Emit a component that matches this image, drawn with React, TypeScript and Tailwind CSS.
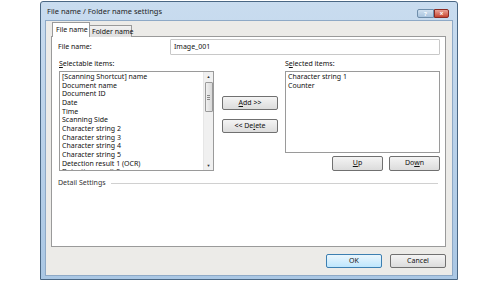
import React from "react";

const F = { fontFamily: '"Noto Sans", "Open Sans", sans-serif' } as const;

function Btn({ children, w, h = 14, primary = false }: { children: React.ReactNode; w: number; h?: number; primary?: boolean }) {
  return (
    <div
      className={
        "flex items-center justify-center whitespace-nowrap rounded-[2px] border text-[7px] text-[#111] " +
        (primary
          ? "border-[#3c7fb1] bg-gradient-to-b from-[#eaf6fd] to-[#bee6fd]"
          : "border-[#707070] bg-gradient-to-b from-[#f4f4f4] to-[#dcdcdc]")
      }
      style={{ width: w, height: h }}
    >
      {children}
    </div>
  );
}

const items = [
  "[Scanning Shortcut] name",
  "Document name",
  "Document ID",
  "Date",
  "Time",
  "Scanning Side",
  "Character string 2",
  "Character string 3",
  "Character string 4",
  "Character string 5",
  "Detection result 1 (OCR)",
  "Detection result 2",
];

export default function App() {
  return (
    <div className="w-[500px] h-[281px] bg-white overflow-hidden" style={F}>
      <div className="ml-[40px] mt-[1px] w-[418px] h-[279px] border border-[#4a6784] bg-gradient-to-b from-[#c9dcef] to-[#aac7e4] flex flex-col rounded-t-[3px]">
        {/* title bar */}
        <div className="h-[18px] flex items-start shrink-0">
          <div className="ml-[6px] mt-[4px] text-[7.5px] text-[#1e1e1e] leading-[10px] whitespace-nowrap">File name / Folder name settings</div>
          <div className="ml-auto mr-[8px] mt-[7px] flex">
            <div className="w-[17px] h-[9px] border border-[#6f8eab] rounded-l-[2px] bg-gradient-to-b from-[#cfe0f0] to-[#a9c4de] flex items-center justify-center text-[6px] text-white font-bold leading-none">?</div>
            <div className="w-[15px] h-[9px] border border-[#8b2a22] rounded-r-[2px] bg-gradient-to-b from-[#e9a196] to-[#c6442f] flex items-center justify-center text-[7px] text-white font-bold leading-none">×</div>
          </div>
        </div>
        {/* client */}
        <div className="mx-[4px] mb-[3px] flex-1 bg-[#ecebe8] border border-[#8ea9c6] flex flex-col">
          {/* tabs */}
          <div className="ml-[6px] mt-[1px] h-[15px] flex items-end relative z-10">
            <div className="w-[38px] h-[15px] bg-white border border-b-0 border-[#9a9a9a] text-[7px] leading-[13px] pl-[3px] text-[#111] whitespace-nowrap">File name</div>
            <div className="w-[42px] h-[12px] bg-gradient-to-b from-[#f2f2f2] to-[#dedede] border border-l-0 border-b-0 border-[#9a9a9a] text-[7px] leading-[11px] pl-[2px] text-[#111] whitespace-nowrap">Folder name</div>
          </div>
          {/* panel */}
          <div className="ml-[5px] w-[395px] h-[211px] -mt-[1px] bg-white border border-[#9a9a9a] flex flex-col text-[7px] text-[#111]">
            <div className="flex items-center mt-[2px] h-[16px]">
              <div className="ml-[6px] w-[112px]">File name:</div>
              <div className="w-[270px] h-[16px] border border-[#c8c8c8] rounded-[1px] pl-[3px] leading-[14px]">Image_001</div>
            </div>
            <div className="flex mt-[4px] h-[9px] leading-[9px]">
              <div className="ml-[7px] w-[226px]"><span className="underline">S</span>electable items:</div>
              <div>S<span className="underline">e</span>lected items:</div>
            </div>
            <div className="flex mt-[3px]">
              {/* left list */}
              <div className="ml-[7px] w-[155px] h-[100px] border border-[#9a9a9a] flex">
                <div className="flex-1 overflow-hidden pl-[2px] pt-[1px]">
                  {items.map((t) => (
                    <div key={t} className="h-[8.67px] leading-[8.67px] whitespace-nowrap">{t}</div>
                  ))}
                </div>
                <div className="w-[10px] bg-[#f0f0f0] border-l border-[#e6e6e6] flex flex-col items-center">
                  <div className="h-[9px] flex items-center text-[4px] text-[#333]">▲</div>
                  <div className="w-[8px] h-[30px] mt-[1px] border border-[#9a9a9a] rounded-[1px] bg-gradient-to-r from-[#f0f0f0] to-[#d8d8d8] flex flex-col items-center justify-center gap-[1px]">
                    <div className="w-[3px] h-px bg-[#888]" />
                    <div className="w-[3px] h-px bg-[#888]" />
                    <div className="w-[3px] h-px bg-[#888]" />
                  </div>
                  <div className="mt-auto h-[9px] flex items-center text-[4px] text-[#333]">▼</div>
                </div>
              </div>
              {/* middle buttons */}
              <div className="ml-[8px] w-[56px] flex flex-col pt-[25px] gap-[9px]">
                <Btn w={56} h={14}><span><span className="underline">A</span>dd &gt;&gt;</span></Btn>
                <Btn w={56} h={14}><span>&lt;&lt; De<span className="underline">l</span>ete</span></Btn>
              </div>
              {/* right list */}
              <div className="ml-[7px] flex flex-col">
                <div className="w-[155px] h-[82px] border border-[#9a9a9a] pl-[2px] pt-[1px]">
                  <div className="h-[8.67px] leading-[8.67px]">Character string 1</div>
                  <div className="h-[8.67px] leading-[8.67px]">Counter</div>
                </div>
                <div className="flex mt-[3px] ml-[47px] gap-[6px]">
                  <Btn w={51} h={15}><span className="underline">U</span>p</Btn>
                  <Btn w={51} h={15}><span>Do<span className="underline">w</span>n</span></Btn>
                </div>
              </div>
            </div>
            <div className="flex items-center mt-[7px] ml-[6px] mr-[7px]">
              <div className="text-[#333] whitespace-nowrap">Detail Settings</div>
              <div className="ml-[5px] flex-1 h-px bg-[#d0d0d0]" />
            </div>
          </div>
          {/* bottom buttons */}
          <div className="flex justify-end mt-[7px] mr-[6px] gap-[8px]">
            <Btn w={56} h={14} primary>OK</Btn>
            <Btn w={56} h={14}>Cancel</Btn>
          </div>
        </div>
      </div>
    </div>
  );
}
